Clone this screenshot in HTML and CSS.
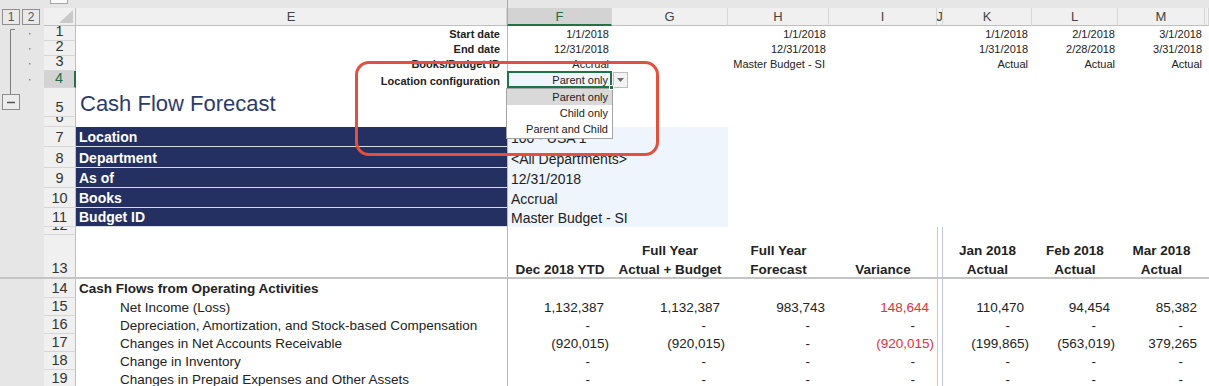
FILE: index.html
```html
<!DOCTYPE html>
<html lang="en">
<head>
    <meta charset="UTF-8">
    <title>Cash Flow Forecast</title>
    <link rel="stylesheet" href="styles.css">
</head>
<body>
    <div class="sheet">
        <!-- barre du haut -->
        <div class="row r-top">
            <div class="gut"></div>
            <div class="rh-top"><span class="namebox"></span></div>
            <div></div><div class="f"></div><div></div><div></div><div></div><div></div><div></div><div></div><div></div><div></div>
        </div>

        <!-- en-tetes de colonnes -->
        <div class="row r-head">
            <div class="gut levels"><span class="lvl">1</span><span class="lvl">2</span></div>
            <div class="corner">
                <svg width="14" height="13" viewBox="0 0 14 13"><path d="M14 0 V13 H0 Z" fill="#c9c9c9"/></svg>
            </div>
            <div class="ch">E</div>
            <div class="ch f sel">F</div>
            <div class="ch">G</div>
            <div class="ch">H</div>
            <div class="ch">I</div>
            <div class="ch">J</div>
            <div class="ch">K</div>
            <div class="ch">L</div>
            <div class="ch">M</div>
            <div class="ch"></div>
        </div>

        <div class="row meta r1">
            <div class="gut"></div><div class="rh">1</div>
            <div class="c e lbl">Start date</div>
            <div class="c f val">1/1/2018</div>
            <div class="c"></div>
            <div class="c val">1/1/2018</div>
            <div class="c"></div><div class="c"></div>
            <div class="c val k">1/1/2018</div>
            <div class="c val">2/1/2018</div>
            <div class="c val">3/1/2018</div>
            <div class="c"></div>
        </div>

        <div class="row meta r2">
            <div class="gut"></div><div class="rh">2</div>
            <div class="c e lbl">End date</div>
            <div class="c f val">12/31/2018</div>
            <div class="c"></div>
            <div class="c val">12/31/2018</div>
            <div class="c"></div><div class="c"></div>
            <div class="c val k">1/31/2018</div>
            <div class="c val">2/28/2018</div>
            <div class="c val">3/31/2018</div>
            <div class="c"></div>
        </div>

        <div class="row meta r3">
            <div class="gut"></div><div class="rh">3</div>
            <div class="c e lbl">Books/Budget ID</div>
            <div class="c f val">Accrual</div>
            <div class="c"></div>
            <div class="c val h">Master Budget - SI</div>
            <div class="c"></div><div class="c"></div>
            <div class="c val k">Actual</div>
            <div class="c val">Actual</div>
            <div class="c val">Actual</div>
            <div class="c"></div>
        </div>

        <div class="row meta r4">
            <div class="gut"></div><div class="rh sel">4</div>
            <div class="c e lbl">Location configuration</div>
            <div class="c f val active">Parent only</div>
            <div class="c"></div><div class="c"></div><div class="c"></div><div class="c"></div>
            <div class="c"></div><div class="c"></div><div class="c"></div><div class="c"></div>
        </div>

        <div class="row r5">
            <div class="gut"></div><div class="rh">5</div>
            <div class="c e title">Cash Flow Forecast</div>
            <div class="c f"></div><div class="c"></div><div class="c"></div><div class="c"></div><div class="c"></div>
            <div class="c"></div><div class="c"></div><div class="c"></div><div class="c"></div>
        </div>

        <div class="row r6">
            <div class="gut"></div><div class="rh">6</div>
            <div class="c e"></div>
            <div class="c f"></div><div class="c"></div><div class="c"></div><div class="c"></div><div class="c"></div>
            <div class="c"></div><div class="c"></div><div class="c"></div><div class="c"></div>
        </div>

        <div class="row filter r7">
            <div class="gut"></div><div class="rh">7</div>
            <div class="c e navy">Location</div>
            <div class="c f fg">100 - USA 1</div>
            <div class="c"></div><div class="c"></div><div class="c"></div>
            <div class="c"></div><div class="c"></div><div class="c"></div><div class="c"></div>
        </div>

        <div class="row filter r8">
            <div class="gut"></div><div class="rh">8</div>
            <div class="c e navy">Department</div>
            <div class="c f fg">&lt;All Departments&gt;</div>
            <div class="c"></div><div class="c"></div><div class="c"></div>
            <div class="c"></div><div class="c"></div><div class="c"></div><div class="c"></div>
        </div>

        <div class="row filter r9">
            <div class="gut"></div><div class="rh">9</div>
            <div class="c e navy">As of</div>
            <div class="c f fg">12/31/2018</div>
            <div class="c"></div><div class="c"></div><div class="c"></div>
            <div class="c"></div><div class="c"></div><div class="c"></div><div class="c"></div>
        </div>

        <div class="row filter r10">
            <div class="gut"></div><div class="rh">10</div>
            <div class="c e navy">Books</div>
            <div class="c f fg">Accrual</div>
            <div class="c"></div><div class="c"></div><div class="c"></div>
            <div class="c"></div><div class="c"></div><div class="c"></div><div class="c"></div>
        </div>

        <div class="row filter r11">
            <div class="gut"></div><div class="rh">11</div>
            <div class="c e navy">Budget ID</div>
            <div class="c f fg">Master Budget - SI</div>
            <div class="c"></div><div class="c"></div><div class="c"></div>
            <div class="c"></div><div class="c"></div><div class="c"></div><div class="c"></div>
        </div>

        <div class="row r12">
            <div class="gut"></div><div class="rh">12</div>
            <div class="c e"></div>
            <div class="c f"></div><div class="c"></div><div class="c"></div><div class="c"></div>
            <div class="c j"></div>
            <div class="c"></div><div class="c"></div><div class="c"></div><div class="c"></div>
        </div>

        <div class="row data r13">
            <div class="gut"></div><div class="rh">13</div>
            <div class="c e"></div>
            <div class="c f hd"><span>Dec 2018 YTD</span></div>
            <div class="c hd"><span>Full Year<br>Actual + Budget</span></div>
            <div class="c hd"><span>Full Year<br>Forecast</span></div>
            <div class="c hd"><span>Variance</span></div>
            <div class="c j"></div>
            <div class="c hd"><span>Jan 2018<br>Actual</span></div>
            <div class="c hd"><span>Feb 2018<br>Actual</span></div>
            <div class="c hd"><span>Mar 2018<br>Actual</span></div>
            <div class="c"></div>
        </div>

        <div class="row data r14">
            <div class="gut"></div><div class="rh">14</div>
            <div class="c e section">Cash Flows from Operating Activities</div>
            <div class="c f"></div><div class="c"></div><div class="c"></div><div class="c"></div>
            <div class="c j"></div>
            <div class="c"></div><div class="c"></div><div class="c"></div><div class="c"></div>
        </div>

        <div class="row data">
            <div class="gut"></div><div class="rh">15</div>
            <div class="c e item">Net Income (Loss)</div>
            <div class="c f num">1,132,387</div>
            <div class="c num">1,132,387</div>
            <div class="c num h">983,743</div>
            <div class="c num red">148,644</div>
            <div class="c j"></div>
            <div class="c num">110,470</div>
            <div class="c num">94,454</div>
            <div class="c num">85,382</div>
            <div class="c"></div>
        </div>

        <div class="row data">
            <div class="gut"></div><div class="rh">16</div>
            <div class="c e item">Depreciation, Amortization, and Stock-based Compensation</div>
            <div class="c f dash">-</div>
            <div class="c dash">-</div>
            <div class="c dash h">-</div>
            <div class="c dash">-</div>
            <div class="c j"></div>
            <div class="c dash">-</div>
            <div class="c dash">-</div>
            <div class="c dash">-</div>
            <div class="c"></div>
        </div>

        <div class="row data">
            <div class="gut"></div><div class="rh">17</div>
            <div class="c e item">Changes in Net Accounts Receivable</div>
            <div class="c f neg">(920,015)</div>
            <div class="c neg">(920,015)</div>
            <div class="c dash h">-</div>
            <div class="c neg red">(920,015)</div>
            <div class="c j"></div>
            <div class="c neg">(199,865)</div>
            <div class="c neg">(563,019)</div>
            <div class="c num">379,265</div>
            <div class="c"></div>
        </div>

        <div class="row data">
            <div class="gut"></div><div class="rh">18</div>
            <div class="c e item">Change in Inventory</div>
            <div class="c f dash">-</div>
            <div class="c dash">-</div>
            <div class="c dash h">-</div>
            <div class="c dash">-</div>
            <div class="c j"></div>
            <div class="c dash">-</div>
            <div class="c dash">-</div>
            <div class="c dash">-</div>
            <div class="c"></div>
        </div>

        <div class="row data">
            <div class="gut"></div><div class="rh">19</div>
            <div class="c e item">Changes in Prepaid Expenses and Other Assets</div>
            <div class="c f dash">-</div>
            <div class="c dash">-</div>
            <div class="c dash h">-</div>
            <div class="c dash">-</div>
            <div class="c j"></div>
            <div class="c dash">-</div>
            <div class="c dash">-</div>
            <div class="c dash">-</div>
            <div class="c"></div>
        </div>

        <!-- plan (groupe de lignes 1-4) -->
        <svg class="outline" width="44" height="112" viewBox="0 0 44 112">
            <path d="M15 29.5 H10.5 V94" fill="none" stroke="#7d7d7d" stroke-width="1"/>
            <rect x="29" y="33" width="1.5" height="1.5" fill="#8a8a8a"/>
            <rect x="29" y="48" width="1.5" height="1.5" fill="#8a8a8a"/>
            <rect x="29" y="63" width="1.5" height="1.5" fill="#8a8a8a"/>
            <rect x="29" y="79" width="1.5" height="1.5" fill="#8a8a8a"/>
            <rect x="2.5" y="94.5" width="17" height="15" fill="#ececec" stroke="#8c8c8c"/>
            <path d="M7 102.5 H15" stroke="#555" stroke-width="1.5"/>
        </svg>

        <!-- liste de validation -->
        <div class="dd-btn">
            <svg width="7" height="4" viewBox="0 0 7 4"><path d="M0 0 H7 L3.5 4 Z" fill="#6b6b6b"/></svg>
        </div>
        <div class="dd-list">
            <div class="dd-item on">Parent only</div>
            <div class="dd-item">Child only</div>
            <div class="dd-item">Parent and Child</div>
        </div>
        <span class="fill-handle"></span>

        <div class="callout"></div>
    </div>
</body>
</html>
```

FILE: styles.css
```css
/* Base */
* {
    margin: 0;
    padding: 0;
    box-sizing: border-box;
}

body {
    width: 1209px;
    height: 386px;
    overflow: hidden;
    background-color: #fff;
    color: #222;
    font-family: 'Liberation Sans', Arial, sans-serif;
}

.sheet {
    position: relative;
}

.row {
    display: grid;
    grid-template-columns: 44px 32px 431px 105px 116px 101px 108px 6px 89px 86px 87px 4px;
}

.row > div {
    display: flex;
    align-items: flex-end;
    overflow: hidden;
    white-space: nowrap;
}

/* hauteurs de lignes */
.data { height: 18px; }
.r-top { height: 8px; background-color: #e6e6e6; }
.r-head { height: 18px; }
.r1 { height: 15px; }
.r2 { height: 15px; }
.r3 { height: 15px; }
.r4 { height: 17px; }
.r5 { height: 29px; }
.r6 { height: 10px; }
.r7 { height: 20px; }
.r8 { height: 21px; }
.r9 { height: 20px; }
.r10 { height: 20px; }
.r11 { height: 19px; }
.r12 { height: 8px; }
.row.r13 { height: 44px; }
.row.r14 { height: 19px; }

/* marge de plan et entetes */
.gut {
    background-color: #e6e6e6;
}

.rh-top {
    padding-left: 6px;
    align-items: flex-start !important;
}

.namebox {
    display: block;
    width: 18px;
    height: 4px;
    background-color: #fafafa;
    border: 1px solid #a6a6a6;
    border-top: none;
}

.r-top .f {
    border-left: 1px solid #a8a8a8;
}

.levels {
    align-items: center !important;
    gap: 2px;
    padding-left: 2px;
}

.lvl {
    width: 18px;
    height: 16px;
    border: 1px solid #8f8f8f;
    background-color: #e9e9e9;
    color: #555;
    font-size: 12px;
    display: flex;
    justify-content: center;
    align-items: center;
}

.corner {
    background-color: #f0f0f0;
    border-right: 1px solid #bfbfbf;
    border-bottom: 1px solid #bfbfbf;
    justify-content: flex-end;
    padding: 0 2px 2px 0;
}

.ch {
    background-color: #f0f0f0;
    border-right: 1px solid #d6d6d6;
    border-bottom: 1px solid #bfbfbf;
    color: #444;
    font-size: 13px;
    justify-content: center;
    align-items: center !important;
}

.ch.f {
    border-left: 1px solid #a8a8a8;
}

.ch.sel {
    background-color: #d3d3d3;
    color: #1e6e42;
    border-bottom: 2px solid #217346;
}

.rh {
    background-color: #f0f0f0;
    border-right: 1px solid #bfbfbf;
    border-bottom: 1px solid #d6d6d6;
    color: #333;
    font-size: 14.5px;
    line-height: 15px;
    justify-content: center;
    padding-bottom: 1px;
}

.rh.sel {
    background-color: #d3d3d3;
    color: #1e6e42;
    border-right: 2px solid #217346;
}

/* cellules */
.c.f {
    border-left: 1px solid #b9b9b9;
}

.meta .c {
    font-size: 11px;
    line-height: 13px;
}

.lbl {
    font-weight: bold;
    justify-content: flex-end;
    padding-right: 7px;
}

.val {
    justify-content: flex-end;
    padding-right: 3px;
}

.val.h,
.val.k {
    padding-right: 4px;
}

.active {
    background-color: #eef5fd;
    outline: 2px solid #217346;
    outline-offset: -2px;
    padding-right: 4px;
    padding-bottom: 1px;
}

.title {
    font-size: 22px;
    line-height: 26px;
    color: #2d3b6b;
    padding-left: 4px;
}

.filter .c {
    font-size: 14px;
    line-height: 17px;
}

.navy {
    background-color: #243062;
    color: #fff;
    font-weight: bold;
    padding-left: 3px;
    border-bottom: 1px solid #d9dce6;
}

.fg {
    grid-column: span 2;
    background-color: #eef5fd;
    padding-left: 3px;
}

.r13 > div {
    border-bottom: 2px solid #c4c4c4;
}

.j {
    border-left: 1px solid #c3c9e6;
    border-right: 1px solid #c3c9e6;
}

.data .c {
    font-size: 13.5px;
    line-height: 16px;
}

.hd {
    font-weight: bold;
    justify-content: center;
    text-align: center;
}

.hd span {
    display: block;
    line-height: 19px;
    margin-bottom: -2px;
}

.section {
    font-weight: bold;
    padding-left: 3px;
    padding-bottom: 1px;
}

.item {
    padding-left: 44px;
}

.num,
.neg,
.dash {
    justify-content: flex-end;
}

.num { padding-right: 8px; }
.neg { padding-right: 3px; }
.dash { padding-right: 22px; }
.num.h { padding-right: 4px; }
.dash.h { padding-right: 19px; }

.red {
    color: #e0323a;
}

/* elements par-dessus la grille */
.outline {
    position: absolute;
    left: 0;
    top: 0;
}

.dd-btn {
    position: absolute;
    left: 613px;
    top: 72px;
    width: 15px;
    height: 16px;
    background-color: #f3f3f3;
    border: 1px solid #bdbdbd;
    display: flex;
    justify-content: center;
    align-items: center;
}

.dd-list {
    position: absolute;
    left: 506px;
    top: 88px;
    width: 107px;
    background-color: #fff;
    border: 1px solid #a3a3a3;
    padding-bottom: 1px;
}

.dd-item {
    height: 16px;
    font-size: 11px;
    line-height: 16px;
    text-align: right;
    padding-right: 4px;
    color: #222;
}

.dd-item.on {
    background-color: #d9d9d9;
}

.fill-handle {
    position: absolute;
    left: 609px;
    top: 85px;
    width: 5px;
    height: 5px;
    background-color: #217346;
    border: 1px solid #fff;
}

.callout {
    position: absolute;
    left: 355px;
    top: 61px;
    width: 304px;
    height: 95px;
    border: 3.5px solid #e3503e;
    border-radius: 14px;
}
```
